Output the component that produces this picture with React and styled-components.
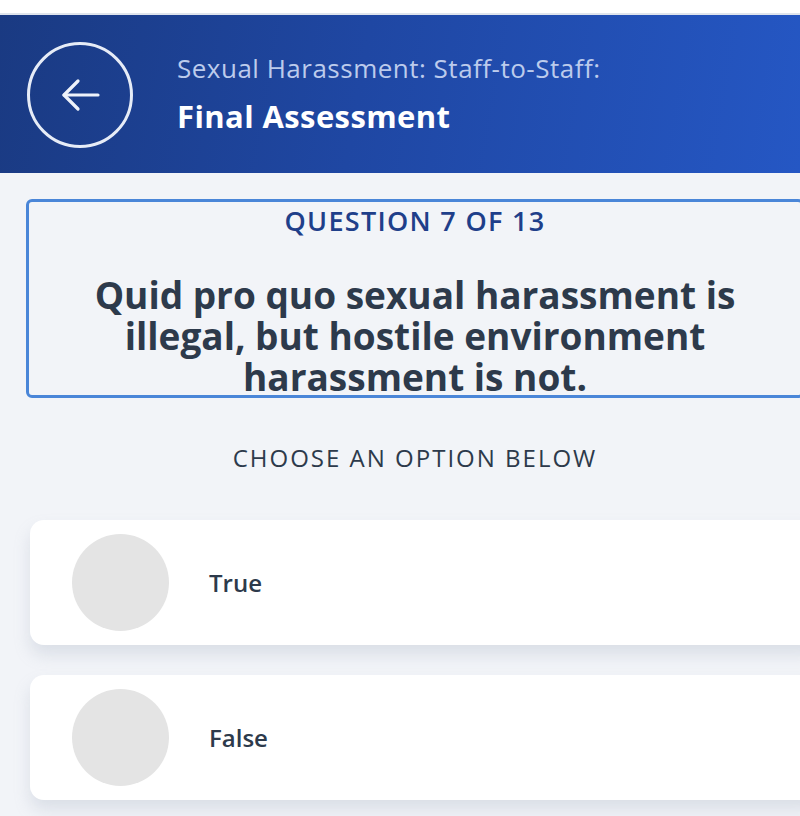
import React from 'react';
import styled, { createGlobalStyle } from 'styled-components';

const GlobalStyle = createGlobalStyle`
  html, body {
    margin: 0;
    padding: 0;
    background: #f2f4f8;
    overflow: hidden;
  }
  body {
    font-family: "Open Sans", Lato, sans-serif;
  }
`;

const Page = styled.div`
  width: 800px;
  height: 816px;
  background: #f2f4f8;
  overflow: hidden;
`;

const StatusStrip = styled.div`
  height: 13px;
  background: #ffffff;
  border-bottom: 2px solid #dfe4ec;
`;

const Header = styled.header`
  height: 158px;
  display: flex;
  align-items: center;
  gap: 44px;
  padding-left: 27px;
  background: linear-gradient(100deg, #1a3a82 0%, #1f47a3 45%, #2557c4 100%);
  box-sizing: border-box;
`;

const BackButton = styled.button`
  width: 106px;
  height: 106px;
  border-radius: 50%;
  border: 3px solid #e6ecf7;
  background: transparent;
  display: flex;
  align-items: center;
  justify-content: center;
  padding: 0;
  margin-top: 2px;
  cursor: pointer;
  box-sizing: border-box;
`;

const Titles = styled.div`
  display: flex;
  flex-direction: column;
  gap: 12px;
  margin-top: -2px;
`;

const Subtitle = styled.div`
  font-size: 26px;
  letter-spacing: 0.5px;
  color: #bccbec;
  line-height: 34px;
`;

const Title = styled.h1`
  margin: 0;
  font-size: 31px;
  letter-spacing: 0.4px;
  font-weight: 700;
  color: #ffffff;
  line-height: 38px;
`;

const Main = styled.main`
  padding: 26px 0 0 26px;
  width: 778px;
`;

const QuestionBox = styled.section`
  border: 3px solid #4a86d8;
  border-radius: 6px;
  height: 199px;
  box-sizing: border-box;
  display: flex;
  flex-direction: column;
  align-items: center;
  padding-top: 1px;
`;

const QuestionCount = styled.div`
  font-size: 27px;
  font-weight: 600;
  letter-spacing: 1.3px;
  color: #1f3f8a;
  line-height: 36px;
`;

const QuestionText = styled.div`
  margin-top: 35px;
  font-size: 37px;
  font-weight: 700;
  color: #2d3a4b;
  line-height: 41px;
  text-align: center;
  width: 700px;
`;

const Prompt = styled.div`
  margin-top: 42px;
  text-align: center;
  font-size: 24px;
  letter-spacing: 2px;
  color: #2d3a4b;
  line-height: 36px;
`;

const Options = styled.div`
  display: flex;
  flex-direction: column;
  gap: 30px;
  margin-top: 44px;
  padding-left: 4px;
`;

const OptionCard = styled.button`
  display: flex;
  align-items: center;
  gap: 40px;
  height: 125px;
  width: 790px;
  padding: 0 0 0 42px;
  border: none;
  border-radius: 14px;
  background: #ffffff;
  box-shadow: 0 10px 16px rgba(150, 165, 185, 0.25);
  cursor: pointer;
  text-align: left;
  box-sizing: border-box;
  font-family: inherit;
`;

const Radio = styled.span`
  width: 97px;
  height: 97px;
  border-radius: 50%;
  background: #e4e4e4;
  flex-shrink: 0;
`;

const OptionLabel = styled.span`
  font-size: 24px;
  font-weight: 600;
  color: #2d3a4b;
`;

const ArrowIcon = () => (
  <svg width="46" height="46" viewBox="0 0 46 46" fill="none" stroke="#eef2fa" strokeWidth="3.2" strokeLinecap="round" strokeLinejoin="round">
    <path d="M41 23H7" />
    <path d="M21 9L7 23l14 14" />
  </svg>
);

const options = ['True', 'False'];

const App = () => (
  <Page>
    <GlobalStyle />
    <StatusStrip />
    <Header>
      <BackButton aria-label="Back">
        <ArrowIcon />
      </BackButton>
      <Titles>
        <Subtitle>Sexual Harassment: Staff-to-Staff:</Subtitle>
        <Title>Final Assessment</Title>
      </Titles>
    </Header>
    <Main>
      <QuestionBox>
        <QuestionCount>QUESTION 7 OF 13</QuestionCount>
        <QuestionText>
          Quid pro quo sexual harassment is illegal, but hostile environment harassment is not.
        </QuestionText>
      </QuestionBox>
      <Prompt>CHOOSE AN OPTION BELOW</Prompt>
      <Options>
        {options.map((opt) => (
          <OptionCard key={opt}>
            <Radio />
            <OptionLabel>{opt}</OptionLabel>
          </OptionCard>
        ))}
      </Options>
    </Main>
  </Page>
);

export default App;
